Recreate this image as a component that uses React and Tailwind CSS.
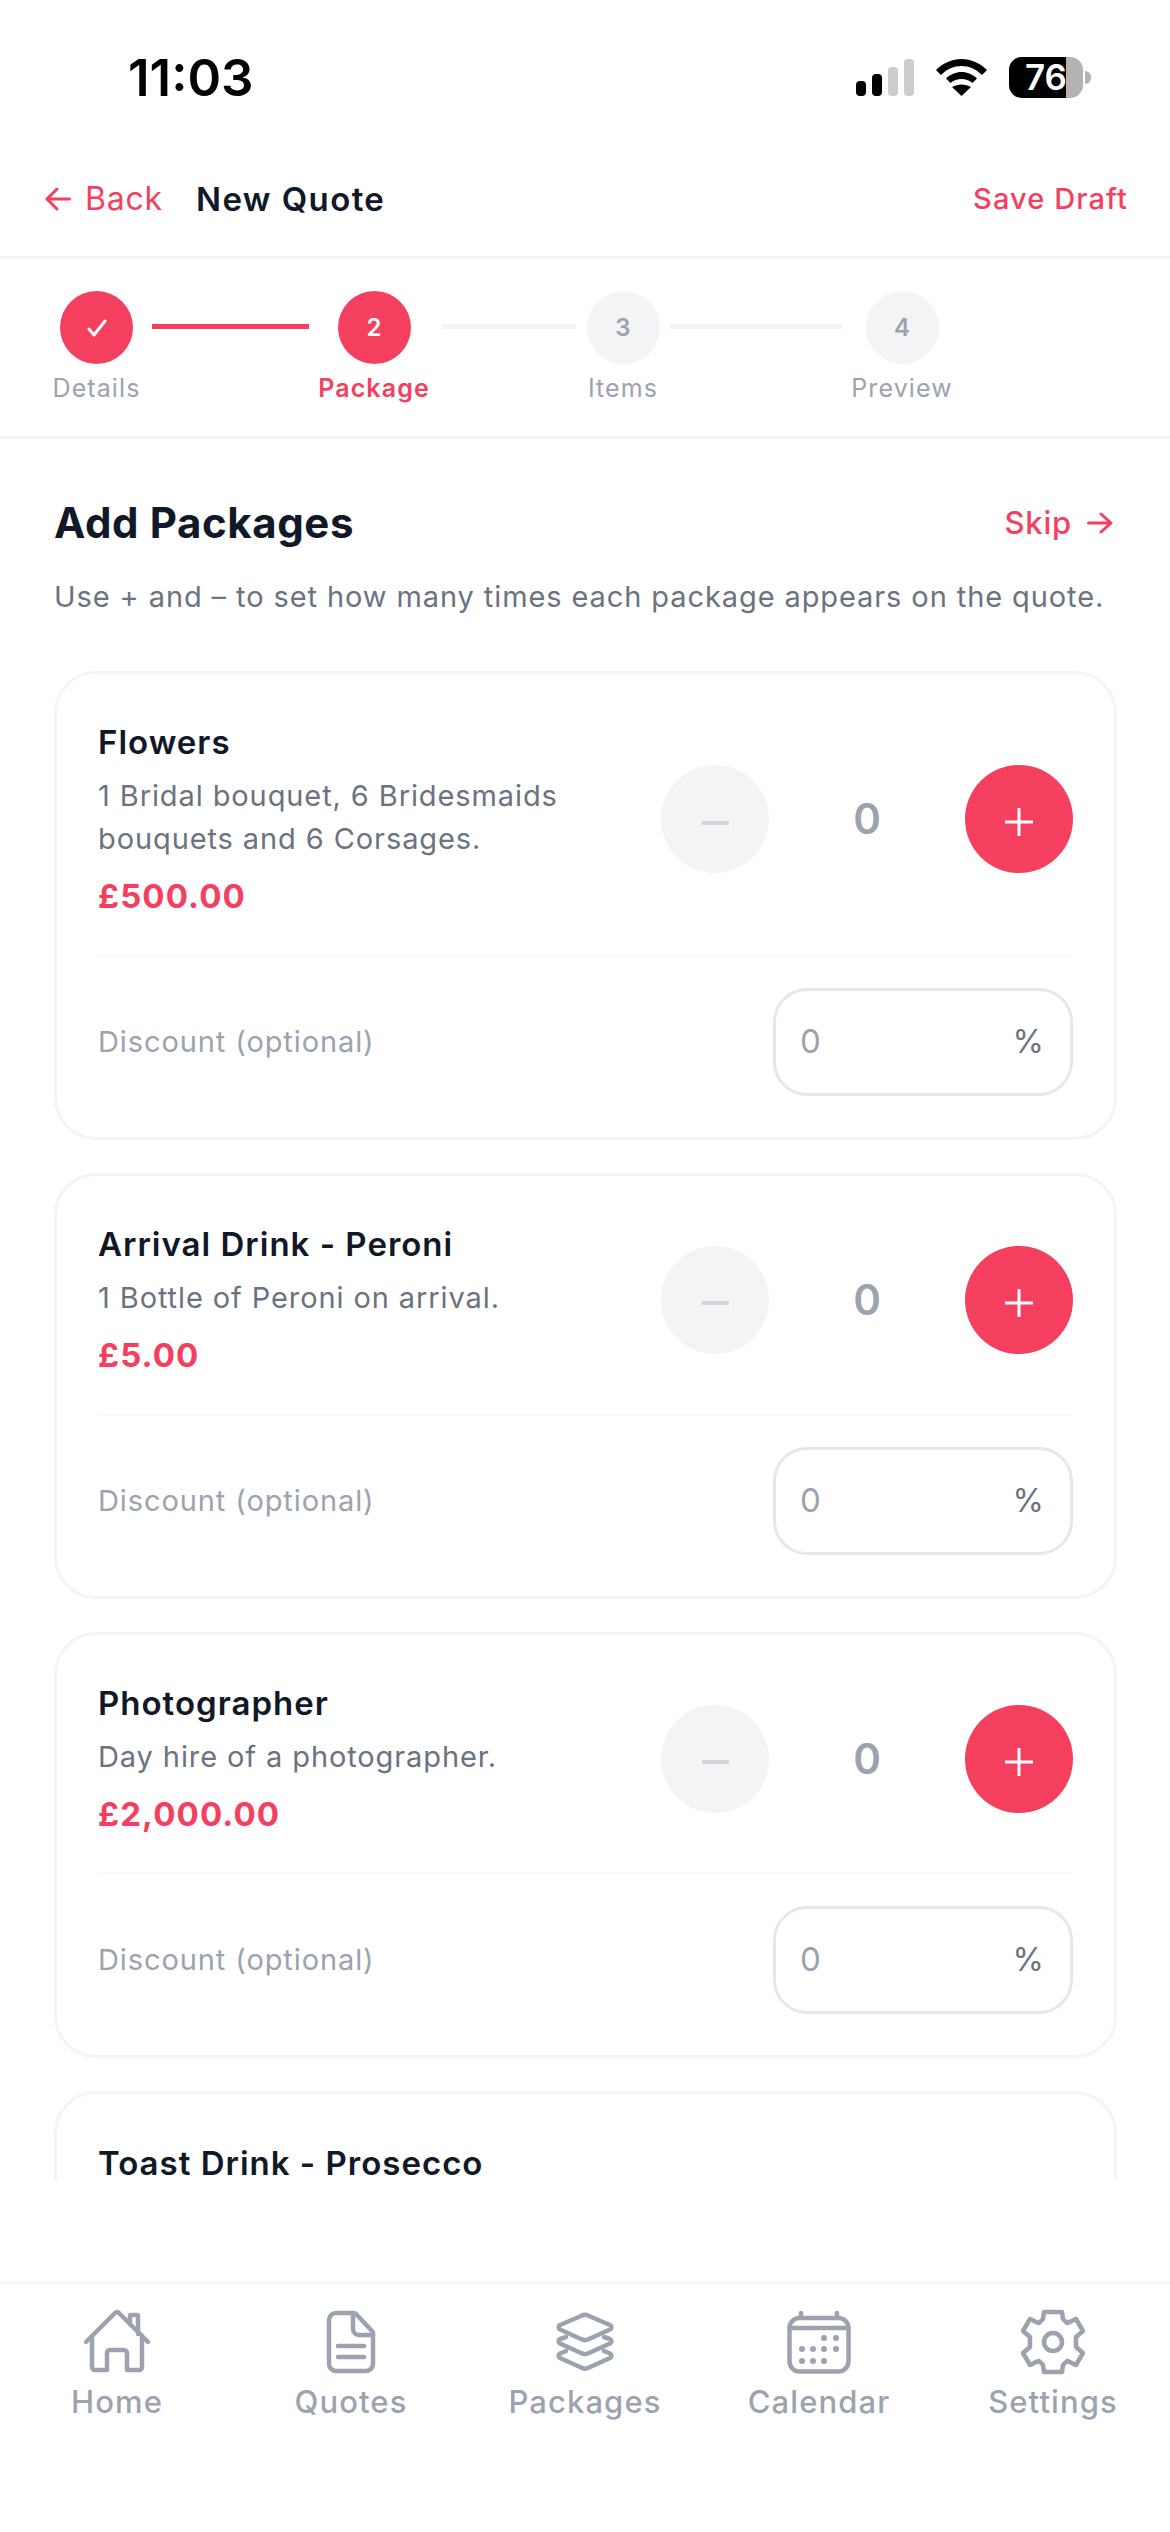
import React from 'react';

const packages = [
    { name: 'Flowers', desc: ['1 Bridal bouquet, 6 Bridesmaids', 'bouquets and 6 Corsages.'], price: '£500.00' },
    { name: 'Arrival Drink - Peroni', desc: ['1 Bottle of Peroni on arrival.'], price: '£5.00' },
    { name: 'Photographer', desc: ['Day hire of a photographer.'], price: '£2,000.00' },
];

const steps = [
    { label: 'Details', w: 'w-[87px]', circle: 'bg-[#f43f5e] text-white', text: 'text-[#9ca3af]', mark: 'check' },
    { label: 'Package', w: 'w-[110px]', line: 'ml-[12px] mr-[10px] w-[157px] bg-[#f43f5e]', circle: 'bg-[#f43f5e] text-white', text: 'text-[#f43f5e] font-semibold', mark: '2' },
    { label: 'Items', w: 'w-[74px]', line: 'ml-[13px] mr-[10px] w-[134px] bg-[#f3f4f6]', circle: 'bg-[#f3f4f6] text-[#9ca3af]', text: 'text-[#9ca3af]', mark: '3' },
    { label: 'Preview', w: 'w-[98px]', line: 'ml-[10px] mr-[11px] w-[172px] bg-[#f3f4f6]', circle: 'bg-[#f3f4f6] text-[#9ca3af]', text: 'text-[#9ca3af]', mark: '4' },
];

function StatusBar() {
    return (
        <div className="h-[152px] shrink-0 pt-[49px] pl-[128px] pr-[79px] flex justify-between items-start">
            <span className="text-[51px] leading-[58px] font-semibold text-black">11:03</span>
            <div className="flex items-center gap-[22px] mt-[8px]">
                <svg width="58" height="37" viewBox="0 0 58 37">
                    <rect x="0" y="22" width="10" height="15" rx="4" fill="#000" />
                    <rect x="16" y="15" width="10" height="22" rx="4" fill="#000" />
                    <rect x="32" y="8" width="10" height="29" rx="4" fill="#ccc" />
                    <rect x="48" y="0" width="10" height="37" rx="4" fill="#ccc" />
                </svg>
                <svg width="51" height="37" viewBox="0 0 51 37">
                    <path d="M25.500 0C35 0 44 4 51 11L46 16C40 10 33 7 25.500 7S11 10 5 16L0 11C7 4 16 0 25.500 0Z" fill="#000" />
                    <path d="M25.500 13C31 13 37 15.500 41 19.500L36.500 24C33.500 21.500 29.500 20 25.500 20S17.500 21.500 14.500 24L10 19.500C14 15.500 20 13 25.500 13Z" fill="#000" />
                    <path d="M25.500 37L16 28C21.500 24.500 29.500 24.500 35 28Z" fill="#000" />
                </svg>
                <div className="flex items-center">
                    <div className="w-[74px] h-[41px] rounded-[13px] overflow-hidden bg-[#b3b3b3] flex">
                        <div className="w-[57px] bg-black text-white text-[35px] leading-[41px] font-semibold pl-[16px] overflow-hidden">76</div>
                    </div>
                    <div className="w-[6px] h-[13px] ml-[2px] rounded-r-full bg-[#b3b3b3]" />
                </div>
            </div>
        </div>
    );
}

function Header() {
    return (
        <div className="h-[107px] shrink-0 border-b-[3px] border-[#f3f4f6] pl-[45px] pr-[42px] flex items-center justify-between pb-[10px]">
            <div className="flex items-center">
                <svg width="26" height="24" viewBox="0 0 26 24" fill="none" stroke="#f43f5e" strokeWidth="3" strokeLinecap="round" strokeLinejoin="round">
                    <path d="M24.500 12H2M12 2L2 12l10 10" />
                </svg>
                <span className="ml-[14px] text-[32px] leading-[44px] tracking-[0.8px] text-[#f43f5e]">Back</span>
                <span className="ml-[33px] text-[33px] leading-[44px] tracking-[1.4px] font-semibold text-[#111827]">New Quote</span>
            </div>
            <span className="text-[29px] leading-[44px] tracking-[1.1px] font-medium text-[#f43f5e]">Save Draft</span>
        </div>
    );
}

function Stepper() {
    return (
        <div className="h-[180px] shrink-0 border-b-[3px] border-[#f3f4f6] pl-[53px] pt-[32px] flex items-start">
            {steps.map(s => (
                <React.Fragment key={s.label}>
                    {s.line && <div className={`h-[5px] mt-[33px] ${s.line}`} />}
                    <div className={`${s.w} flex flex-col items-center shrink-0`}>
                        <div className={`w-[73px] h-[73px] rounded-full flex items-center justify-center text-[24px] font-semibold ${s.circle}`}>
                            {s.mark === 'check' ? (
                                <svg width="24" height="24" viewBox="0 0 24 24" fill="none" stroke="#fff" strokeWidth="3" strokeLinecap="round" strokeLinejoin="round">
                                    <path d="M4 13l5 6L20 5" />
                                </svg>
                            ) : s.mark}
                        </div>
                        <span className={`mt-[6px] text-[25px] leading-[36px] tracking-[1.1px] whitespace-nowrap ${s.text}`}>{s.label}</span>
                    </div>
                </React.Fragment>
            ))}
        </div>
    );
}

function PackageCard({ pkg }) {
    return (
        <div className="border-[3px] border-[#f3f4f6] rounded-[42px] px-[41px] pt-[44px] pb-[41px]">
            <div className="flex items-center justify-between pb-[34px] border-b-[3px] border-[#f9fafb]">
                <div>
                    <div className="text-[33px] leading-[48px] tracking-[1px] font-semibold text-[#111827]">{pkg.name}</div>
                    <div className="mt-[8px] text-[29px] leading-[43px] tracking-[0.9px] text-[#6b7280]">
                        {pkg.desc.map(line => <div key={line}>{line}</div>)}
                    </div>
                    <div className="mt-[12px] text-[33px] leading-[48px] tracking-[1.1px] font-bold text-[#f43f5e]">{pkg.price}</div>
                </div>
                <div className="flex items-center">
                    <div className="w-[108px] h-[108px] rounded-full bg-[#f3f4f6] flex items-center justify-center">
                        <div className="w-[27px] h-[4px] mt-[7px] bg-[#d1d5db]" />
                    </div>
                    <div className="w-[196px] text-center text-[42px] leading-[48px] font-semibold text-[#9ca3af]">0</div>
                    <div className="w-[108px] h-[108px] rounded-full bg-[#f43f5e] flex items-center justify-center">
                        <svg className="mt-[6px]" width="28" height="28" viewBox="0 0 28 28" stroke="#fff" strokeWidth="3"><path d="M14 0v28M0 14h28" /></svg>
                    </div>
                </div>
            </div>
            <div className="flex items-center justify-between mt-[31px]">
                <span className="text-[29px] tracking-[0.9px] text-[#9ca3af]">Discount (optional)</span>
                <div className="w-[300px] h-[108px] border-[3px] border-[#e5e7eb] rounded-[34px] pl-[24px] pr-[26px] flex items-center justify-between">
                    <span className="text-[33px] text-[#9ca3af]">0</span>
                    <span className="text-[32px] text-[#6b7280]">%</span>
                </div>
            </div>
        </div>
    );
}

function HomeIcon() {
    return (
        <svg width="66" height="66" viewBox="0 0 66 66" fill="none" stroke="#9ca3af" strokeWidth="4.5" strokeLinejoin="round" strokeLinecap="round">
            <path d="M2 33L31 4a3 3 0 0 1 4 0L64 33" />
            <path d="M46 15V7a1 1 0 0 1 1-1h6a1 1 0 0 1 1 1V25" />
            <path d="M8 27V58a3 3 0 0 0 3 3H23V44a3 3 0 0 1 3-3H40a3 3 0 0 1 3 3V61H55a3 3 0 0 0 3-3V27" />
        </svg>
    );
}

function QuotesIcon() {
    return (
        <svg width="50" height="64" viewBox="0 0 50 64" fill="none" stroke="#9ca3af" strokeWidth="4.5" strokeLinejoin="round" strokeLinecap="round">
            <path d="M27 3H10a7 7 0 0 0-7 7v44a7 7 0 0 0 7 7h30a7 7 0 0 0 7-7V24a4 4 0 0 0-1-3L30 4a4 4 0 0 0-3-1z" />
            <path d="M27 4v15a6 6 0 0 0 6 6h14" />
            <path d="M12 36h26M12 47h26" />
        </svg>
    );
}

function LayersIcon() {
    return (
        <svg width="60" height="60" viewBox="0 0 60 60" fill="none" stroke="#9ca3af" strokeWidth="4.5" strokeLinejoin="round" strokeLinecap="round">
            <path d="M26 4L5 13a2.500 2.500 0 0 0 0 4.500L26 27a8 8 0 0 0 8 0L55 17.500a2.500 2.500 0 0 0 0-4.500L34 4a8 8 0 0 0-8 0z" />
            <path d="M11 25L5 27a2.500 2.500 0 0 0 0 4.500L26 41a8 8 0 0 0 8 0L55 31.500a2.500 2.500 0 0 0 0-4.500L49 25" />
            <path d="M11 39L5 41.500a2.500 2.500 0 0 0 0 4.500L26 55.500a8 8 0 0 0 8 0L55 46a2.500 2.500 0 0 0 0-4.500L49 39" />
        </svg>
    );
}

function CalendarIcon() {
    const dots = [[37, 28], [49, 28], [15, 39], [26, 39], [37, 39], [49, 39], [15, 51], [26, 51], [37, 51]];
    return (
        <svg width="64" height="64" viewBox="0 0 64 64" fill="none" stroke="#9ca3af" strokeWidth="4.5" strokeLinecap="round">
            <rect x="2.500" y="8" width="59" height="53.500" rx="10" />
            <path d="M2.500 18h59M14 3v5M50 3v5" />
            {dots.map(([x, y]) => <circle key={`${x}-${y}`} cx={x} cy={y} r="3" fill="#9ca3af" stroke="none" />)}
        </svg>
    );
}

function SettingsIcon() {
    return (
        <svg width="64" height="66" viewBox="0 0 64 66" fill="none" stroke="#9ca3af" strokeWidth="4.5" strokeLinejoin="round">
            <path d="M23 3H41L42 10L46 14C50 13 52 11 55 10L62 22L55 28V38L62 44L55 56C52 55 50 53 46 52L42 56L41 63H23L22 56L18 52C14 53 12 55 9 56L2 44L9 38V28L2 22L9 10C12 11 14 13 18 14L22 10Z" />
            <circle cx="32" cy="33" r="9" />
        </svg>
    );
}

const tabs = [
    { label: 'Home', Icon: HomeIcon },
    { label: 'Quotes', Icon: QuotesIcon },
    { label: 'Packages', Icon: LayersIcon },
    { label: 'Calendar', Icon: CalendarIcon },
    { label: 'Settings', Icon: SettingsIcon },
];

export default function App() {
    return (
        <div className="w-[1170px] h-[2532px] bg-white overflow-hidden font-['Inter',sans-serif] flex flex-col">
            <StatusBar />
            <Header />
            <Stepper />
            <main className="h-[1741px] shrink-0 overflow-hidden pl-[54px] pr-[53px]">
                <div className="flex items-center justify-between pt-[56px]">
                    <h1 className="text-[42px] leading-[56px] tracking-[0.6px] font-bold text-[#111827]">Add Packages</h1>
                    <div className="flex items-center gap-[15px] pr-[4px]">
                        <span className="text-[31px] tracking-[0.8px] text-[#f43f5e] font-medium">Skip</span>
                        <svg width="26" height="22" viewBox="0 0 26 22" fill="none" stroke="#f43f5e" strokeWidth="3" strokeLinecap="round" strokeLinejoin="round">
                            <path d="M1.500 11H24M14 2l10 9-10 9" />
                        </svg>
                    </div>
                </div>
                <p className="mt-[24px] text-[29px] leading-[44px] tracking-[0.9px] text-[#6b7280] whitespace-nowrap">Use + and – to set how many times each package appears on the quote.</p>
                <div className="mt-[52px] flex flex-col gap-[33px]">
                    {packages.map(p => <PackageCard key={p.name} pkg={p} />)}
                    <div className="border-[3px] border-[#f3f4f6] rounded-[42px] px-[41px] pt-[53px] h-[300px]">
                        <div className="text-[33px] leading-[32px] tracking-[1px] font-semibold text-[#111827]">Toast Drink - Prosecco</div>
                    </div>
                </div>
            </main>
            <div className="h-[250px] shrink-0 mt-[102px] border-t-[2px] border-[#f3f4f6] pt-[25px] flex">
                {tabs.map(({ label, Icon }) => (
                    <div key={label} className="w-[234px] flex flex-col items-center">
                        <div className="h-[66px] flex items-center"><Icon /></div>
                        <span className="mt-[5px] text-[31px] leading-[44px] tracking-[1.1px] font-medium text-[#9ca3af]">{label}</span>
                    </div>
                ))}
            </div>
        </div>
    );
}
